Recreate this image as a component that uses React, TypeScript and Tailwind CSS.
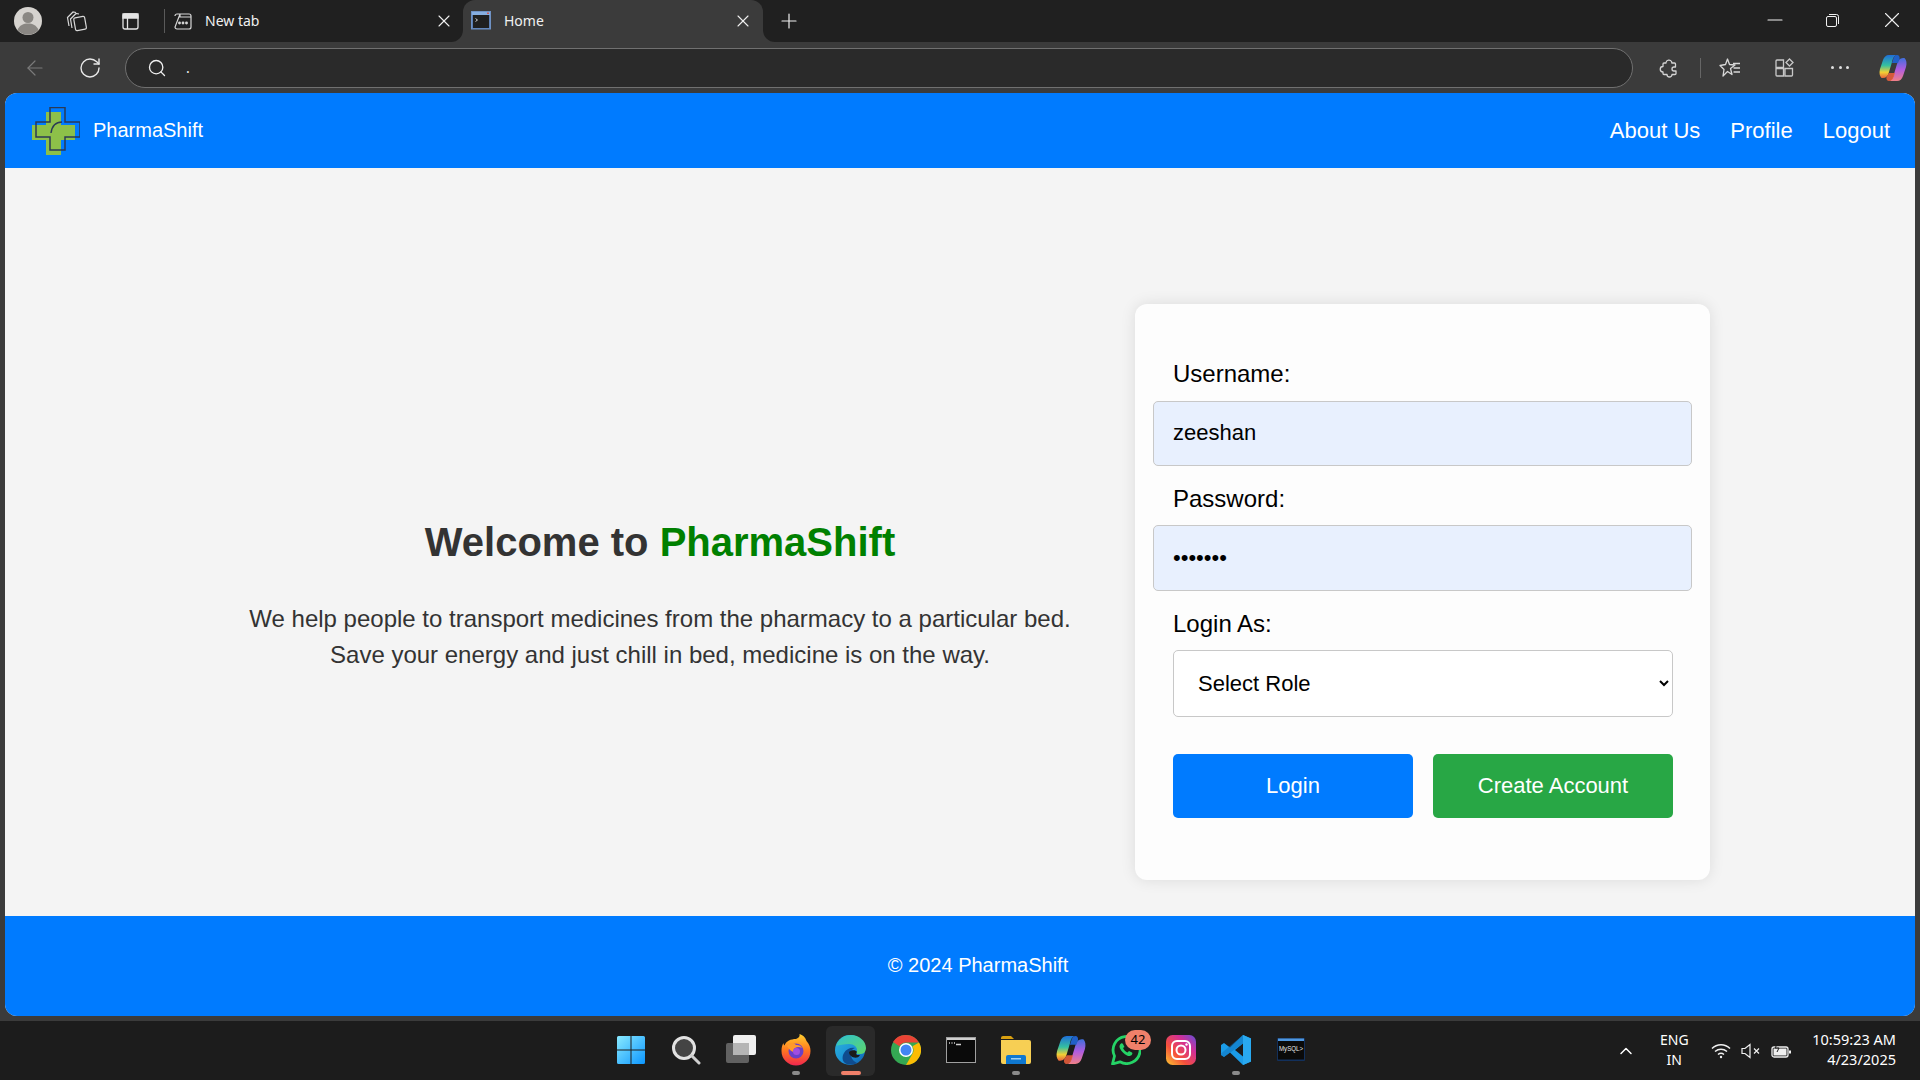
import { ChevronUp, Search, RotateCw, ArrowLeft, Plus, X, Minus } from 'lucide-react'

function Avatar() {
  return (
    <svg width="28" height="28" viewBox="0 0 28 28">
      <circle cx="14" cy="14" r="14" fill="#d6d3cf" />
      <circle cx="14" cy="10.5" r="5.5" fill="#8a8783" />
      <path d="M3.5 23c2-5 6-6.5 10.500-6.500S22.500 18 24.500 23a14 14 0 0 1-21 0z" fill="#8a8783" />
    </svg>
  )
}

function CollectionsIcon() {
  return (
    <svg width="22" height="22" viewBox="0 0 22 22" fill="none" stroke="#d8d8d8" strokeWidth="1.2">
      <path d="M3 16 1.500 7.500 7 2l3 .5" />
      <path d="M6 18 4.500 9 10 3.500l3 .5" />
      <rect x="8.500" y="7" width="11" height="13" rx="1.500" transform="rotate(-10 14 13)" />
    </svg>
  )
}

function VerticalTabsIcon() {
  return (
    <svg width="20" height="20" viewBox="0 0 20 20" fill="none" stroke="#e4e4e4" strokeWidth="1.300">
      <rect x="3" y="3" width="15" height="15" rx="2" />
      <path d="M3 3h15v4H3z" fill="#e4e4e4" />
      <path d="M7.500 7v11" />
    </svg>
  )
}

function NewTabIcon() {
  return (
    <svg width="18" height="18" viewBox="0 0 18 18" fill="none" stroke="#d8d8d8" strokeWidth="1.200">
      <path d="M1 4a2 2 0 0 1 2-2h3v3h11M6 2h9a2 2 0 0 1 2 2v11a2 2 0 0 1-2 2H3a2 2 0 0 1-2-2z" />
      <circle cx="5.500" cy="11" r=".8" fill="#d8d8d8" />
      <circle cx="9" cy="11" r=".8" fill="#d8d8d8" />
      <circle cx="12.500" cy="11" r=".8" fill="#d8d8d8" />
    </svg>
  )
}

function HomeTabIcon() {
  return (
    <svg width="20" height="20" viewBox="0 0 20 20">
      <rect x=".5" y=".5" width="19" height="17.500" fill="#5b7fb5" stroke="#6f92c4" />
      <rect x="1" y="1" width="18" height="3" fill="#86aee0" />
      <rect x="16" y="1.500" width="2" height="1.500" fill="#c85a5a" />
      <rect x="2" y="4" width="16" height="13" fill="#1f1f1f" />
      <path d="M4.500 7.500 6.500 9 4.500 10.500" fill="none" stroke="#d0d0d0" strokeWidth="1" />
    </svg>
  )
}

function PuzzleIcon() {
  return (
    <svg width="20" height="20" viewBox="0 0 20 20" fill="none" stroke="#d4d4d4" strokeWidth="1.300" strokeLinejoin="round">
      <path d="M7 4.500a3 3 0 0 1 5.500-1c.300.500.300 1 .3 1.500h2.700a1 1 0 0 1 1 1v3h-1.500a2 2 0 0 0 0 4H17v2.500a1 1 0 0 1-1 1h-3a2.500 2.500 0 0 1-5 0H5a1 1 0 0 1-1-1V14a2.500 2.500 0 0 1 0-5.500V6a1 1 0 0 1 1-1h2z" />
    </svg>
  )
}

function StarListIcon() {
  return (
    <svg width="22" height="22" viewBox="0 0 22 22" fill="none" stroke="#d8d8d8" strokeWidth="1.300" strokeLinejoin="round">
      <path d="M8.500 2 10.500 7.500 16 8 11.500 11.500 13 17.500 8.500 14.500 4 19 5 12.500 1 8.500 6.500 7.500z" />
      <path d="M14 6.500h7M14.500 11h6.500M14.500 15h6.500" />
    </svg>
  )
}

function WorkspacesIcon() {
  return (
    <svg width="20" height="20" viewBox="0 0 20 20" fill="none" stroke="#c8c8c8" strokeWidth="1.300">
      <path d="M1 3a1 1 0 0 1 1-1h6.500v7.500H1zM1 10.500h7.500V18H2a1 1 0 0 1-1-1zM10 10.500h7.500V17a1 1 0 0 1-1 1H10z" />
      <path d="M14.500 1l3.500 3.500-3.500 3.500L11 4.500z" />
    </svg>
  )
}

function CopilotIcon({ size }: { size: number }) {
  return (
    <svg width={size} height={size} viewBox="0 0 28 28">
      <defs>
        <linearGradient id="copA" x1="0" y1="0" x2="0" y2="1">
          <stop offset="0" stopColor="#1f6fd8" />
          <stop offset=".45" stopColor="#35c0a0" />
          <stop offset=".75" stopColor="#f2d034" />
          <stop offset="1" stopColor="#e8643c" />
        </linearGradient>
        <linearGradient id="copB" x1="0" y1="0" x2="0" y2="1">
          <stop offset="0" stopColor="#3f6fdc" />
          <stop offset=".5" stopColor="#b05ce0" />
          <stop offset="1" stopColor="#f08088" />
        </linearGradient>
      </defs>
      <path d="M10 1h8c-3 .5-4 3-5 7l-3 10c-1 4-3 6-6 6H2.500C.500 22 0 19 1 15l3-9c1-3 3-5 6-5z" fill="url(#copA)" />
      <path d="M18 27h-8c3-.5 4-3 5-7l3-10c1-4 3-6 6-6h1.500c2 2 2.500 5 1.500 9l-3 9c-1 3-3 5-6 5z" fill="url(#copB)" />
      <path d="M10 27c-2 0-3-2-2.500-4L10 19h6l-1 3c-.8 3-2.500 5-5 5z" fill="#f0603c" opacity=".85" />
      <path d="M18 1c2 0 3 2 2.500 4L19 9h-6l1-3c.8-3 2-5 4-5z" fill="#2060c8" />
    </svg>
  )
}

function LogoMark() {
  return (
    <svg width="48" height="48" viewBox="32 107 48 48" fill="none">
      <path d="M46 112h15v13h14v15H61v15H46v-15H32v-15h14z" fill="#8dc049" />
      <path d="M50 122v-14.500h15V122h15v15H65v13H50v-13H36v-15z" stroke="#2b3a55" strokeWidth="1.500" />
      <path d="M51 133c1-7 5-11 11-11" stroke="#2b3a55" strokeWidth="1.500" />
    </svg>
  )
}

function WindowsLogo() {
  return (
    <svg width="30" height="30" viewBox="0 0 30 30">
      <defs>
        <linearGradient id="winG" x1="0" y1="0" x2="1" y2="1">
          <stop offset="0" stopColor="#8aeaff" />
          <stop offset="1" stopColor="#0c96ff" />
        </linearGradient>
      </defs>
      <path d="M1 2.500A1.500 1.500 0 0 1 2.500 1H14.500V14.500H1zM15.500 1H27.500A1.500 1.500 0 0 1 29 2.500V14.500H15.500zM1 15.500H14.500V29H2.500A1.500 1.500 0 0 1 1 27.500zM15.500 15.500H29V27.500A1.500 1.500 0 0 1 27.500 29H15.500z" fill="url(#winG)" />
    </svg>
  )
}

function SearchGlass() {
  return (
    <svg width="30" height="30" viewBox="0 0 30 30">
      <circle cx="13" cy="13" r="10.500" fill="#444" stroke="#e2e2e2" strokeWidth="3" />
      <path d="M20.500 20.500 28 28" stroke="#cfcfcf" strokeWidth="3" strokeLinecap="round" />
    </svg>
  )
}

function TaskView() {
  return (
    <svg width="30" height="30" viewBox="0 0 30 30">
      <rect x="0" y="8" width="23" height="20" rx="2" fill="#616161" />
      <rect x="7" y="0" width="23" height="20" rx="2" fill="#efefef" />
      <rect x="7" y="8" width="16" height="12" fill="#b5b5b5" />
    </svg>
  )
}

function Firefox() {
  return (
    <svg width="30" height="32" viewBox="0 0 30 32">
      <defs>
        <linearGradient id="ffG" x1="0" y1="0" x2="0" y2="1">
          <stop offset="0" stopColor="#ffcf2e" />
          <stop offset=".5" stopColor="#ff7a1f" />
          <stop offset="1" stopColor="#f0264e" />
        </linearGradient>
      </defs>
      <path d="M15 5c3-1 4-3 3.500-5 5 2 6 4 7 7 3 3 4 7 4 10a14.500 14.500 0 0 1-29 0c0-3 .5-6 2-8 0 1 .5 2 1 2.500C5 7 10 5 15 5z" fill="url(#ffG)" />
      <circle cx="15" cy="17" r="7.500" fill="#6a3fc8" />
      <path d="M6 12c3-3 7-3 9-1 2-.5 5 .5 6 3-2-1.500-5-1.500-7 0-2 1-1 3-2 4-1.500-1-3.500-2-6-6z" fill="#ff9a2c" />
      <circle cx="15.500" cy="17.500" r="3.500" fill="#a04ee0" />
    </svg>
  )
}

function Edge() {
  return (
    <svg width="32" height="32" viewBox="0 0 32 32">
      <defs>
        <linearGradient id="edgeA" x1="0" y1="0" x2="1" y2="1">
          <stop offset="0" stopColor="#2db6d8" />
          <stop offset=".6" stopColor="#1a8fd8" />
          <stop offset="1" stopColor="#0f5ca8" />
        </linearGradient>
        <linearGradient id="edgeB" x1="0" y1="0" x2="1" y2="1">
          <stop offset="0" stopColor="#2fc1d0" />
          <stop offset="1" stopColor="#5ed66a" />
        </linearGradient>
      </defs>
      <circle cx="15" cy="16" r="15" fill="url(#edgeA)" />
      <path d="M1.500 12C3 5 9 1 16 1c8 0 15 6 15 13 0 3-2 6-5 6h-3c-2 0-2-1-1-3 .5-4-3-7-8-7-5 0-10 1-13 2z" fill="url(#edgeB)" />
      <path d="M22 29c-3 2-9 2-12 0-3-2-3-7-1-10 2-4 7-6 11-5-3 1-5 4-4 8 1 4 4 6 6 7z" fill="#0f4c8f" />
      <path d="M14 18c3-2.500 7-2 8 0-1 1-1 2 0 3h3c-2 4-7 3-9 1-1-1-2-2-2-4z" fill="#1b1b1b" />
    </svg>
  )
}

function Chrome() {
  return (
    <svg width="30" height="30" viewBox="0 0 30 30">
      <circle cx="15" cy="15" r="15" fill="#34a853" />
      <path d="M15 0a15 15 0 0 1 13 7.500H15a7.500 7.500 0 0 0-6.500 3.750L2 7A15 15 0 0 1 15 0z" fill="#ea4335" />
      <path d="M28 7.500A15 15 0 0 1 15 30l6.500-11.250A7.500 7.500 0 0 0 21.500 11.250z" fill="#fbbc04" />
      <circle cx="15" cy="15" r="7" fill="#fff" />
      <circle cx="15" cy="15" r="5.500" fill="#4285f4" />
    </svg>
  )
}

function Terminal() {
  return (
    <svg width="30" height="26" viewBox="0 0 30 26">
      <rect x=".5" y=".5" width="29" height="25" fill="#0a0a0a" stroke="#a0a0a0" />
      <rect x="1" y="1" width="28" height="2" fill="#d0d0d0" />
      <path d="M3 6h1M5.500 6h1M8 6h1M10 7.500h5" stroke="#d0d0d0" strokeWidth="1.300" />
    </svg>
  )
}

function Folder() {
  return (
    <svg width="30" height="28" viewBox="0 0 30 28">
      <path d="M0 2a2 2 0 0 1 2-2h8l3 3h-13z" fill="#d9a010" />
      <path d="M0 4h28a2 2 0 0 1 2 2v20a2 2 0 0 1-2 2H2a2 2 0 0 1-2-2z" fill="#f7cf54" />
      <path d="M5 21a2 2 0 0 1 2-2h16a2 2 0 0 1 2 2v7H5z" fill="#0f78d0" />
      <rect x="10" y="22" width="10" height="1.500" fill="#9dd0f5" />
    </svg>
  )
}

function WhatsApp() {
  return (
    <svg width="30" height="30" viewBox="0 0 30 30" fill="none">
      <path d="M1.500 29 3.500 21A13.500 13.500 0 1 1 9 26.800z" stroke="#25d366" strokeWidth="2.800" strokeLinejoin="round" />
      <path d="M10 8.500c-1.500 1-2 3-1 5 1.500 3 4 5.500 7 7 2 1 4 .5 5-1 .5-1 .5-1.500 0-2l-3-1.500-1.500 1.500c-2-1-3.500-2.500-4.500-4.500L13.500 12 12 9c-.5-.8-1.200-.8-2-.5z" fill="#25d366" />
    </svg>
  )
}

function Instagram() {
  return (
    <svg width="30" height="30" viewBox="0 0 30 30">
      <defs>
        <linearGradient id="igG" x1="0" y1="1" x2="1" y2="0">
          <stop offset="0" stopColor="#fdc830" />
          <stop offset=".35" stopColor="#f5503c" />
          <stop offset=".7" stopColor="#d12f98" />
          <stop offset="1" stopColor="#5f50d8" />
        </linearGradient>
      </defs>
      <rect width="30" height="30" rx="6.500" fill="url(#igG)" />
      <rect x="6" y="6" width="18" height="18" rx="5" fill="none" stroke="#fff" strokeWidth="2" />
      <circle cx="15" cy="15" r="4.500" fill="none" stroke="#fff" strokeWidth="2" />
      <circle cx="20.500" cy="9.500" r="1.200" fill="#fff" />
    </svg>
  )
}

function VSCode() {
  return (
    <svg width="30" height="30" viewBox="0 0 30 30">
      <path d="M22 0 30 3.500V26.500L22 30 9 17.500 3 22 0 20V10L3 8l6 4.500zM22 8.500 14 15l8 6.500z" fill="#1b9ce8" fillRule="evenodd" />
      <path d="M22 0 30 3.500V26.500L22 30z" fill="#29a9f0" />
      <path d="M22 0v8.500L3 22 0 20V18.500z" fill="#0f74bd" opacity=".55" />
    </svg>
  )
}

function MySqlWindow() {
  return (
    <svg width="28" height="24" viewBox="0 0 28 24">
      <rect width="28" height="23" rx="1" fill="#12305c" />
      <rect x="1" y=".5" width="26" height="2.500" fill="#4f97e0" />
      <rect x="1" y="3" width="26" height="18.500" fill="#0a0a0a" />
      <text x="2" y="13" fontSize="7" textLength="24" lengthAdjust="spacingAndGlyphs" fill="#e8e8e8" fontFamily="Liberation Sans, sans-serif">MySQL&gt;</text>
    </svg>
  )
}

const taskbarItems = [
  { key: 'start', icon: <WindowsLogo /> },
  { key: 'search', icon: <SearchGlass /> },
  { key: 'taskview', icon: <TaskView /> },
  { key: 'firefox', icon: <Firefox />, dot: true },
  { key: 'edge', icon: <Edge />, active: true },
  { key: 'chrome', icon: <Chrome /> },
  { key: 'terminal', icon: <Terminal /> },
  { key: 'folder', icon: <Folder />, dot: true },
  { key: 'copilot', icon: <CopilotIcon size={30} /> },
  { key: 'whatsapp', icon: <WhatsApp />, badge: '42' },
  { key: 'instagram', icon: <Instagram /> },
  { key: 'vscode', icon: <VSCode />, dot: true },
  { key: 'mysql', icon: <MySqlWindow /> },
]

function BrowserChrome() {
  return (
    <>
      {/* Tab strip */}
      <div className="flex h-[42px] shrink-0 font-['Noto_Sans',sans-serif] text-[14px] text-[#f0f0f0]">
        <div className="flex w-[463px] items-center rounded-br-xl bg-[#202020]">
          <div className="ml-[14px]"><Avatar /></div>
          <div className="ml-[24px]"><CollectionsIcon /></div>
          <div className="ml-[32px]"><VerticalTabsIcon /></div>
          <div className="ml-[24px] h-[24px] w-px bg-[#5a5a5a]" />
          <div className="ml-[9px]"><NewTabIcon /></div>
          <span className="ml-[13px] -translate-y-[1px]">New tab</span>
          <X className="ml-auto mr-[9px] h-[20px] w-[20px]" strokeWidth={1.3} />
        </div>
        <div className="w-[300px] bg-[#202020]">
          <div className="flex h-full items-center rounded-t-xl bg-[#3b3b3b]">
            <div className="ml-[8px]"><HomeTabIcon /></div>
            <span className="ml-[13px] -translate-y-[1px]">Home</span>
            <X className="ml-auto mr-[10px] h-[20px] w-[20px]" strokeWidth={1.3} />
          </div>
        </div>
        <div className="flex flex-1 items-center rounded-bl-xl bg-[#202020]">
          <Plus className="ml-[14px] h-[24px] w-[24px]" strokeWidth={1.2} />
          <Minus className="ml-auto h-[24px] w-[24px] -translate-y-[1px]" strokeWidth={1.1} />
          <svg className="ml-[39px] -translate-y-[1px]" width="13" height="13" viewBox="0 0 13 13" fill="none" stroke="#f0f0f0">
            <rect x=".5" y="2.500" width="10" height="10" rx="1.500" />
            <path d="M3 .5h7.500a2 2 0 0 1 2 2V10" />
          </svg>
          <X className="ml-[40px] mr-[15px] h-[26px] w-[26px] -translate-y-[1px]" strokeWidth={1} />
        </div>
      </div>

      {/* Address row */}
      <div className="flex h-[51px] shrink-0 items-center">
        <ArrowLeft className="ml-[23px] h-[24px] w-[24px] text-[#7a7a7a]" strokeWidth={1.2} />
        <RotateCw className="ml-[31px] h-[24px] w-[24px] text-[#e8e8e8]" strokeWidth={1.4} />
        <div className="ml-[23px] flex h-[40px] w-[1508px] items-center rounded-full border border-[#707070] bg-[#2a2a2a] font-['Noto_Sans',sans-serif] text-[14px] text-[#f0f0f0]">
          <Search className="ml-[21px] h-[20px] w-[20px]" strokeWidth={1.6} />
          <span className="ml-[19px]">.</span>
        </div>
        <div className="ml-[26px]"><PuzzleIcon /></div>
        <div className="ml-[21px] h-[20px] w-px bg-[#666]" />
        <div className="ml-[18px]"><StarListIcon /></div>
        <div className="ml-[34px]"><WorkspacesIcon /></div>
        <div className="ml-[36px] flex w-[18px] justify-between">
          <span className="h-[3px] w-[3px] rounded-full bg-[#e0e0e0]" />
          <span className="h-[3px] w-[3px] rounded-full bg-[#e0e0e0]" />
          <span className="h-[3px] w-[3px] rounded-full bg-[#e0e0e0]" />
        </div>
        <div className="ml-[30px]"><CopilotIcon size={28} /></div>
      </div>
    </>
  )
}

function LoginCard() {
  return (
    <form className="flex h-[576px] w-[575px] shrink-0 flex-col rounded-[12px] bg-[#fdfdfd] px-[18px] pt-[56px] shadow-[0_0_15px_rgba(0,0,0,0.1)]">
      <label className="ml-[20px] mb-[13px] block h-[28px] text-[24px] leading-[28px] text-black">Username:</label>
      <input
        type="text"
        readOnly
        value="zeeshan"
        className="h-[65px] w-full rounded-[5px] border border-[#c8c8c8] bg-[#e8f0fe] px-[19px] pb-[2px] text-[22px] text-black outline-none"
      />
      <label className="ml-[20px] mb-[12px] mt-[19px] block h-[28px] text-[24px] leading-[28px] text-black">Password:</label>
      <input
        type="password"
        readOnly
        value="zeeshan"
        className="h-[66px] w-full rounded-[5px] border border-[#c8c8c8] bg-[#e8f0fe] px-[19px] text-[22px] text-black outline-none"
      />
      <label className="ml-[20px] mb-[12px] mt-[19px] block h-[28px] text-[24px] leading-[28px] text-black">Login As:</label>
      <select className="ml-[20px] h-[67px] w-[500px] rounded-[5px] border border-[#c8c8c8] bg-white px-[20px] text-[22px] text-black outline-none">
        <option>Select Role</option>
      </select>
      <div className="ml-[20px] mt-[37px] flex w-[500px] gap-[20px]">
        <button type="button" className="h-[64px] flex-1 rounded-[5px] bg-[#007bff] pb-[2px] text-[22px] text-white">Login</button>
        <button type="button" className="h-[64px] flex-1 rounded-[5px] bg-[#28a745] pb-[2px] text-[22px] text-white">Create Account</button>
      </div>
    </form>
  )
}

function PharmaPage() {
  return (
    <div className="mx-[5px] flex h-[923px] shrink-0 flex-col overflow-hidden rounded-xl bg-[#f4f4f4] font-['Liberation_Sans',Arial,sans-serif]">
      <header className="flex h-[75px] shrink-0 items-center bg-[#007bff] pl-[27px] pr-[25px] text-white">
        <LogoMark />
        <span className="ml-[13px] pb-[2px] text-[20px]">PharmaShift</span>
        <nav className="ml-auto flex gap-[30px] pb-[1px] text-[22px]">
          <a>About Us</a>
          <a>Profile</a>
          <a>Logout</a>
        </nav>
      </header>
      <main className="flex flex-1 items-center pb-[36px] pl-[241px] pt-[136px]">
        <div className="mr-[61px] w-[828px] pt-[7px] text-center text-[#333]">
          <h1 className="text-[40px] font-bold leading-[48px]">
            Welcome to <span className="text-[#008000]">PharmaShift</span>
          </h1>
          <p className="mt-[35px] text-[24px] leading-[36px]">
            We help people to transport medicines from the pharmacy to a particular bed.
            <br />
            Save your energy and just chill in bed, medicine is on the way.
          </p>
        </div>
        <LoginCard />
      </main>
      <footer className="flex h-[100px] shrink-0 items-center justify-center bg-[#007bff] pb-[2px] pl-[36px] text-[20px] text-white">
        © 2024 PharmaShift
      </footer>
    </div>
  )
}

function Taskbar() {
  return (
    <div className="mt-[5px] flex h-[59px] shrink-0 items-center bg-[#1c1c1c] pl-[603px] font-['Noto_Sans',sans-serif] text-white">
      <div className="flex h-full items-center">
        {taskbarItems.map((item) => (
          <div key={item.key} className="relative flex h-[50px] w-[55px] items-center justify-center">
            {item.active && <div className="absolute inset-y-0 left-[3px] right-[3px] rounded-md bg-[#2a2a2a]" />}
            <div className="relative -translate-y-[1px]">{item.icon}</div>
            {item.badge && (
              <span className="absolute left-[27px] top-[4px] flex h-[20px] w-[26px] items-center justify-center rounded-full bg-[#f0806a] text-[13px] text-black">
                {item.badge}
              </span>
            )}
            {item.dot && <span className="absolute bottom-[1px] h-[4px] w-[8px] rounded-full bg-[#8a8a8a]" />}
            {item.active && <span className="absolute bottom-[1px] h-[4px] w-[20px] rounded-full bg-[#f0806a]" />}
          </div>
        ))}
      </div>
      <div className="ml-auto flex items-center pr-[24px] text-[14px]">
        <ChevronUp className="h-[20px] w-[20px]" strokeWidth={1.8} />
        <div className="ml-[18px] w-[40px] -translate-y-[1px] text-center leading-[20px]">
          <div>ENG</div>
          <div>IN</div>
        </div>
        <svg className="ml-[17px]" width="20" height="16" viewBox="0 0 20 16" fill="none" stroke="#f0f0f0" strokeWidth="1.500">
          <path d="M1 5.500c5-5 13-5 18 0M4 8.500c3.500-3 8.500-3 12 0M7 11.500c1.800-1.500 4.200-1.500 6 0" />
          <circle cx="10" cy="14" r="1.200" fill="#f0f0f0" stroke="none" />
        </svg>
        <svg className="ml-[10px]" width="20" height="16" viewBox="0 0 20 16" fill="none" stroke="#f0f0f0" strokeWidth="1.200">
          <path d="M1 5.500h3L9 1.500v13L4 10.500H1z" />
          <path d="M13 5.500l5 5M18 5.500l-5 5" />
        </svg>
        <svg className="ml-[10px]" width="21" height="16" viewBox="0 0 21 16" fill="none" stroke="#f0f0f0" strokeWidth="1.300">
          <rect x="1" y="4" width="16" height="10" rx="2" />
          <path d="M2.500 5.500h13v7h-13z" fill="#f0f0f0" stroke="none" />
          <path d="M19 7.500v3" strokeWidth="2" />
          <path d="M7 0 4 5h4L6 9" stroke="#1c1c1c" strokeWidth="1" />
        </svg>
        <div className="ml-[20px] -translate-y-[2px] text-right text-[14.5px] leading-[20px]">
          <div>10:59:23 AM</div>
          <div>4/23/2025</div>
        </div>
      </div>
    </div>
  )
}

export default function App() {
  return (
    <div className="flex h-screen w-full flex-col overflow-hidden bg-[#3b3b3b]">
      <BrowserChrome />
      <PharmaPage />
      <Taskbar />
    </div>
  )
}
